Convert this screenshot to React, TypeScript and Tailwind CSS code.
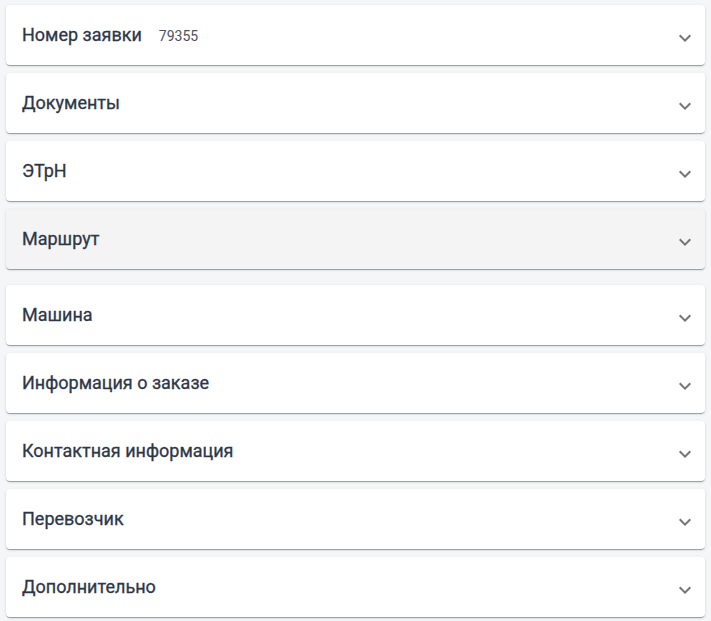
import React from "react";

const SECTIONS: { title: string; extra?: string; active?: boolean }[] = [
  { title: "Номер заявки", extra: "79355" },
  { title: "Документы" },
  { title: "ЭТрН" },
  { title: "Маршрут", active: true },
  { title: "Машина" },
  { title: "Информация о заказе" },
  { title: "Контактная информация" },
  { title: "Перевозчик" },
  { title: "Дополнительно" },
];

function ExpandIcon() {
  return (
    <svg viewBox="0 0 24 24" className="mt-[5px] h-6 w-6 fill-[#757575]">
      <path d="M16.59 8.59 12 13.17 7.41 8.59 6 10l6 6 6-6z" />
    </svg>
  );
}

export default function App() {
  return (
    <div
      className="min-h-[621px] bg-[#f5f6f8] px-[6px] pt-[5px] pb-2"
      style={{ fontFamily: "Roboto, 'Noto Sans', sans-serif" }}
    >
      <div className="flex flex-col">
        {SECTIONS.map((s, i) => (
          <div
            key={s.title}
            className={
              (s.active ? "bg-[#f4f4f4] " : "bg-white ") +
              (i > 0 ? (SECTIONS[i - 1].active ? "mt-4 " : "mt-2 ") : "") +
              "flex h-[60px] items-center justify-between rounded pl-4 pr-2 shadow-[0px_2px_1px_-1px_rgba(0,0,0,0.2),0px_1px_1px_0px_rgba(0,0,0,0.14),0px_1px_3px_0px_rgba(0,0,0,0.12)]"
            }
          >
            <div className="mb-[2px] flex items-baseline">
              <span className="text-[18px] font-normal text-[#2d3748] [-webkit-text-stroke:0.3px_#2d3748]">
                {s.title}
              </span>
              {s.extra && (
                <span className="ml-[17px] text-[14px] text-[#4a5260]">{s.extra}</span>
              )}
            </div>
            <ExpandIcon />
          </div>
        ))}
      </div>
    </div>
  );
}
